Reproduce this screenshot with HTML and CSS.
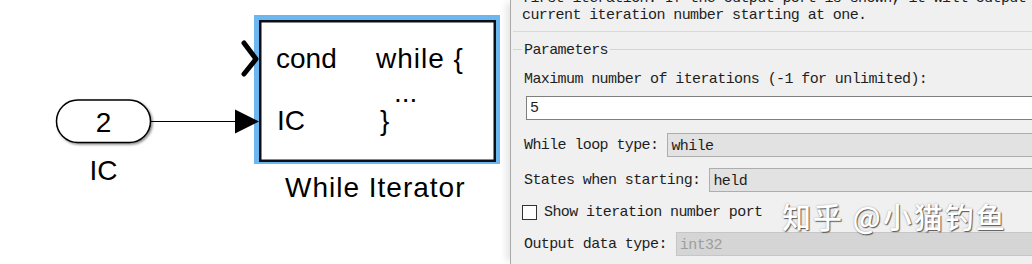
FILE: index.html
```html
<!DOCTYPE html>
<html>
<head>
    <title>While Iterator</title>
    <link rel="stylesheet" href="styles.css">
</head>
<body>
    <div class="window">
        <!-- Model canvas -->
        <div class="canvas">
            <svg class="diagram" width="510" height="264" viewBox="0 0 510 264">
                <defs>
                    <filter id="pillShadow" x="-10%" y="-20%" width="130%" height="160%">
                        <feDropShadow dx="1.5" dy="1.5" stdDeviation="1" flood-color="#000" flood-opacity="0.45"/>
                    </filter>
                </defs>

                <!-- Inport 2 -->
                <rect x="56.5" y="100" width="94" height="42.5" rx="21.25" fill="#fff" stroke="#000" stroke-width="1.5" filter="url(#pillShadow)"/>
                <text class="big" x="103.5" y="131.5" text-anchor="middle">2</text>
                <text class="big" x="103.5" y="180" text-anchor="middle">IC</text>

                <!-- Signal line -->
                <line x1="151" y1="121.5" x2="237" y2="121.5" stroke="#000" stroke-width="1.2"/>

                <!-- While Iterator block -->
                <rect x="254" y="15" width="246" height="149" fill="#6cb7ef"/>
                <rect x="260.25" y="21.25" width="234.5" height="139.5" fill="#fff" stroke="#0b0f1a" stroke-width="2.5"/>
                <polygon points="235,109.5 259,121.5 235,133.5" fill="#000"/>
                <polyline points="244,43 256,59 244,74" fill="none" stroke="#000" stroke-width="5" stroke-linecap="round" stroke-linejoin="round"/>

                <text class="big" x="276" y="67.5">cond</text>
                <text class="big wide" x="376" y="67.5">while {</text>
                <text class="big" x="394" y="102">...</text>
                <text class="big" x="277" y="130">IC</text>
                <text class="big" x="380" y="130">}</text>
                <text class="big wide" x="285" y="196.5">While Iterator</text>
            </svg>
        </div>

        <!-- Block parameters dialog -->
        <div class="panel">
            <div class="desc">first iteration. If the output port is shown, it will output the<br>current iteration number starting at one.</div>

            <div class="group-title"><span>Parameters</span></div>

            <div class="field-label">Maximum number of iterations (-1 for unlimited):</div>
            <div class="edit">5</div>

            <div class="row row-first">
                <span class="label">While loop type:</span>
                <div class="combo">while</div>
            </div>
            <div class="row">
                <span class="label">States when starting:</span>
                <div class="combo">held</div>
            </div>
            <div class="check-row">
                <span class="check"></span>
                <span class="label">Show iteration number port</span>
            </div>
            <div class="row row-last">
                <span class="label">Output data type:</span>
                <div class="combo disabled">int32</div>
            </div>

            <div class="watermark">知乎 @小猫钓鱼</div>
        </div>
    </div>
</body>
</html>
```

FILE: styles.css
```css
html, body {
    margin: 0;
    padding: 0;
    background-color: #fff;
    overflow: hidden;
}

.window {
    display: flex;
    width: 1032px;
    height: 264px;
}

.canvas {
    flex: none;
    width: 510px;
    height: 264px;
    background-color: #fff;
}

.diagram {
    display: block;
}

.diagram text {
    font-family: "Liberation Sans", Arial, sans-serif;
    fill: #000;
}

.diagram .big {
    font-size: 28px;
}

.diagram .wide {
    letter-spacing: 1px;
}

/* Dialog */
.panel {
    position: relative;
    flex: 1;
    height: 264px;
    overflow: hidden;
    background-color: #f0f0f0;
    border-left: 1px solid #a9a9a9;
    box-shadow: -7px 0 7px -3px rgba(0, 0, 0, 0.1);
    font-family: "Liberation Mono", "Courier New", monospace;
    font-size: 15px;
    letter-spacing: -0.6px;
    line-height: 17px;
    color: #1e1e1e;
}

.desc {
    margin: -10px 0 0 2px;
    padding: 0 0 7px 9px;
    white-space: nowrap;
    border-bottom: 1px solid #d9d9d9;
}

.group-title {
    display: flex;
    margin-top: 10px;
    margin-left: 2px;
}

.group-title::before,
.group-title::after {
    content: "";
    margin-top: 7px;
    height: 0;
    border-top: 1px solid #d5d5d5;
}

.group-title::before {
    width: 9px;
}

.group-title::after {
    flex: 1;
}

.group-title span {
    padding: 0 2px;
}

.field-label {
    margin-top: 12px;
    padding-left: 13px;
    white-space: pre;
}

.edit {
    box-sizing: border-box;
    height: 24px;
    margin: 8px -20px 0 15px;
    padding: 3px 3px 0;
    background-color: #fff;
    border: 1px solid #7f7f7f;
}

.row {
    display: flex;
    align-items: center;
    margin-top: 11px;
    padding-left: 13px;
}

.row-first {
    margin-top: 13px;
}

.label {
    white-space: pre;
}

.combo {
    box-sizing: border-box;
    flex: 1;
    height: 24px;
    margin: 0 -20px 0 9px;
    padding: 4px 3px 0;
    background-color: #e2e2e2;
    border: 1px solid #adadad;
}

.combo.disabled {
    background-color: #d5d5d5;
    border-color: #c6c6c6;
    color: #9d9d9d;
}

.check-row {
    display: flex;
    align-items: center;
    height: 17px;
    margin-top: 12px;
    padding-left: 11px;
}

.check {
    box-sizing: border-box;
    flex: none;
    width: 15px;
    height: 15px;
    margin-right: 7px;
    background-color: #fff;
    border: 1px solid #333;
}

.row-last {
    margin-top: 11px;
}

/* Site watermark */
.watermark {
    position: absolute;
    left: 271px;
    top: 196px;
    font-family: "Noto Sans CJK SC", sans-serif;
    font-size: 29px;
    font-weight: 500;
    letter-spacing: 2px;
    line-height: 40px;
    color: #fff;
    text-shadow: 1px 1px 1px rgba(0, 0, 0, 0.6), 0 0 2px rgba(0, 0, 0, 0.3);
}
```
